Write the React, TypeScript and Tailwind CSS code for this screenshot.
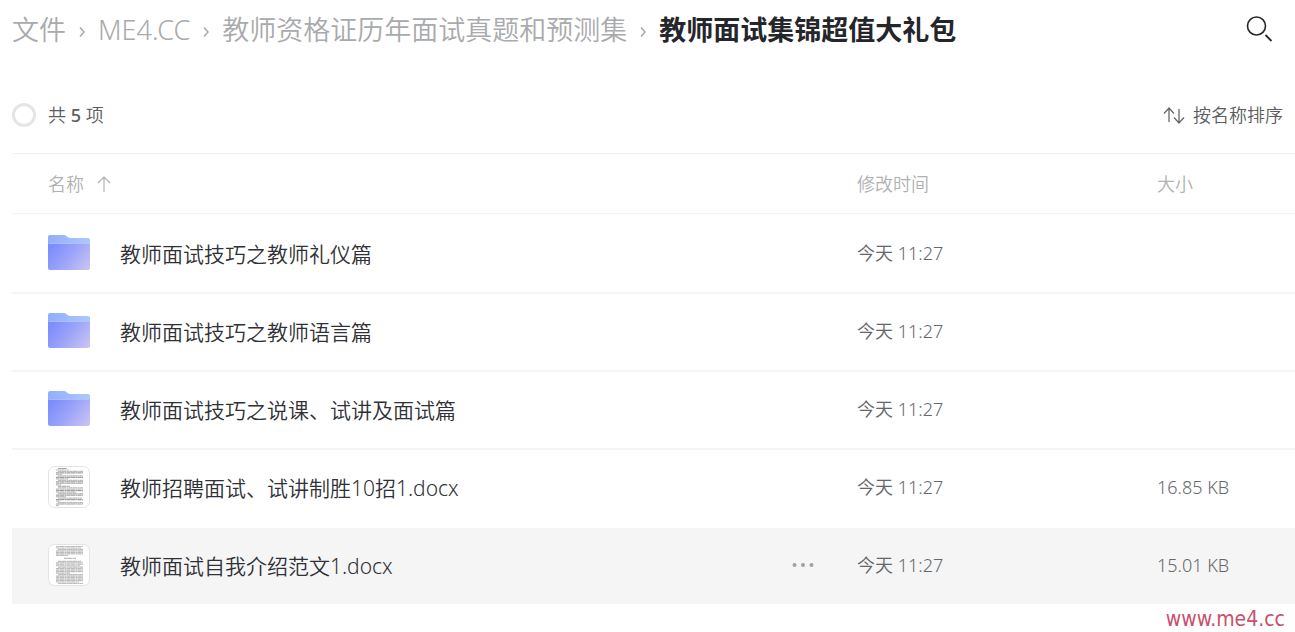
import { clsx } from "clsx";

type Item = {
  name: string;
  type: "folder" | "list" | "article";
  time: string;
  size?: string;
  active?: boolean;
};

const PATHS = ["文件", "ME4.CC", "教师资格证历年面试真题和预测集"];

const ITEMS: Item[] = [
  { name: "教师面试技巧之教师礼仪篇", type: "folder", time: "今天 11:27" },
  { name: "教师面试技巧之教师语言篇", type: "folder", time: "今天 11:27" },
  { name: "教师面试技巧之说课、试讲及面试篇", type: "folder", time: "今天 11:27" },
  { name: "教师招聘面试、试讲制胜10招1.docx", type: "list", time: "今天 11:27", size: "16.85 KB" },
  { name: "教师面试自我介绍范文1.docx", type: "article", time: "今天 11:27", size: "15.01 KB", active: true },
];

// [start, width] of each text line on the page preview
const PREVIEW_LINES = {
  list: [
    [2, 9], [0, 13], [2, 25], [0, 27], [0, 6], [2, 25], [0, 27], [0, 12], [2, 25], [0, 27], [0, 27],
    [0, 5], [2, 12], [2, 25], [0, 27], [0, 27], [0, 20], [2, 25], [0, 27], [0, 10], [2, 24], [0, 27],
    [0, 4], [2, 25], [0, 27], [0, 3],
  ],
  article: [
    [0, 27], [0, 25], [2, 25], [0, 27], [0, 27], [0, 27], [0, 12], [0, 0], [8, 12], [0, 0], [2, 23],
    [0, 27], [0, 27], [0, 24], [2, 25], [0, 27], [0, 27], [0, 27], [0, 14], [2, 25], [0, 27], [0, 27],
    [0, 27], [0, 27], [0, 23], [2, 25],
  ],
};

const FolderIcon = () => (
  <svg className="w-[42px] h-[42px] shrink-0" viewBox="0 0 42 42" aria-hidden="true">
    <defs>
      <linearGradient id="folder-front" x1="0" y1="0.3" x2="1" y2="0.8">
        <stop offset="0" stopColor="#7c8dfd" />
        <stop offset="0.5" stopColor="#9da5f8" />
        <stop offset="1" stopColor="#c6c0f5" />
      </linearGradient>
      <linearGradient id="folder-back" x1="0" y1="0" x2="1" y2="0">
        <stop offset="0" stopColor="#92aefb" />
        <stop offset="1" stopColor="#adc8ff" />
      </linearGradient>
    </defs>
    <path
      d="M0 5a2 2 0 0 1 2-2h13.500c1.200 0 2 .3 2.800 1l1.700 1.300c.6.500 1.200.7 2 .7h18a2 2 0 0 1 2 2v12H0z"
      fill="url(#folder-back)"
    />
    <path d="M0 13a2 2 0 0 1 2-2h38a2 2 0 0 1 2 2v23a2 2 0 0 1-2 2H2a2 2 0 0 1-2-2z" fill="url(#folder-front)" />
    <path d="M1 11.500h40" stroke="#b9cbff" strokeOpacity="0.7" />
  </svg>
);

const DocIcon = ({ type }: { type: "list" | "article" }) => (
  <svg className="w-[42px] h-[42px] shrink-0" viewBox="0 0 42 42" aria-hidden="true">
    <rect x="0.5" y="0.5" width="41" height="41" rx="6" fill="#fff" stroke="#e3e3e3" />
    {PREVIEW_LINES[type].map(([start, width], index) => (
      <path
        key={"line" + index}
        d={`M${8 + start} ${2.5 + index * 1.480}h${width}`}
        stroke={type === "list" && index % 3 === 0 ? "#a0a0a0" : "#bcbcbc"}
        strokeWidth="1.200"
        strokeDasharray="3 0.3 5 0.4 2 0.3"
      />
    ))}
  </svg>
);

const SearchIcon = () => (
  <svg className="w-[30px] h-[30px]" viewBox="0 0 30 30" fill="none" stroke="#25262b" aria-hidden="true">
    <circle cx="11.500" cy="11" r="9" strokeWidth="1.600" />
    <path d="M20.500 20l6 6" strokeWidth="1.800" />
  </svg>
);

const SortIcon = () => (
  <svg className="w-6 h-6" viewBox="0 0 24 24" fill="none" stroke="#66676b" strokeWidth="1.300" aria-hidden="true">
    <path d="M8 19V5M3 10.500l5-5.500 5 5.500M18 6v14M13 14.500l5 5.500 5-5.500" />
  </svg>
);

const ArrowUpIcon = () => (
  <svg className="w-4 h-4" viewBox="0 0 16 16" fill="none" stroke="#b0b1b3" strokeWidth="1.200" aria-hidden="true">
    <path d="M8 16V1M2 7l6-6 6 6" />
  </svg>
);

const ChevronIcon = () => (
  <svg className="w-2 h-3 mt-1" viewBox="0 0 8 12" fill="none" stroke="#a4a5a8" strokeWidth="1.400" aria-hidden="true">
    <path d="M2 1.500L6 6l-4 4.500" />
  </svg>
);

const MoreIcon = () => (
  <svg className="w-6 h-6" viewBox="0 0 24 24" fill="#a0a1a3" aria-hidden="true">
    <circle cx="3.500" cy="12" r="2" />
    <circle cx="12" cy="12" r="2" />
    <circle cx="20.500" cy="12" r="2" />
  </svg>
);

const Breadcrumb = () => (
  <header className="flex items-center justify-between h-[60px] pr-5">
    <nav className="flex items-center text-[27px] leading-9 whitespace-nowrap">
      {PATHS.map((path) => (
        <div key={path} className="flex items-center">
          <a href="#" className="text-[#a9aaac]">
            {path}
          </a>
          <span className="flex justify-center w-8">
            <ChevronIcon />
          </span>
        </div>
      ))}
      <h1 className="font-bold text-[#25262b]">教师面试集锦超值大礼包</h1>
    </nav>
    <button className="cursor-pointer" aria-label="搜索">
      <SearchIcon />
    </button>
  </header>
);

const Toolbar = () => (
  <div className="flex items-center justify-between h-6 mt-[43px] mb-[26px] pr-3 text-[18px] text-[#5c5d61]">
    <label className="flex items-center gap-3">
      <input
        type="checkbox"
        className="w-6 h-6 appearance-none rounded-full border-[3px] border-[#e5e5e6] bg-white checked:bg-[#637dff]"
      />
      <span>
        共 <span className="font-medium">5</span> 项
      </span>
    </label>
    <button className="flex items-center gap-2 cursor-pointer">
      <SortIcon />
      按名称排序
    </button>
  </div>
);

const Row = ({ item, first }: { item: Item; first: boolean }) => {
  const cell = clsx(
    "h-[78px] p-0 pb-0.5 border-t-2 bg-clip-padding",
    first || item.active ? "border-transparent" : "border-[#f5f5f6]",
    item.active && "bg-[#f5f5f6]",
  );

  return (
    <tr>
      <td className={cell}>
        <div className="flex items-center pl-9 pr-[42px]">
          {item.type === "folder" ? <FolderIcon /> : <DocIcon type={item.type} />}
          <a href="#" className="ml-[30px] pt-0.5 text-[21px] leading-7 text-[#303136]">
            {item.name}
          </a>
          {item.active && (
            <button className="ml-auto cursor-pointer" aria-label="更多">
              <MoreIcon />
            </button>
          )}
        </div>
      </td>
      <td className={cell}>{item.time}</td>
      <td className={cell}>{item.size}</td>
    </tr>
  );
};

const FileTable = () => (
  <table className="w-full table-fixed border-separate border-spacing-0 text-left text-[18px] leading-6 text-[#66676b]">
    <thead className="text-[#b0b1b3]">
      <tr>
        <th className="h-[61px] p-0 pl-9 border-y border-[#f3f3f4] font-[350]" aria-sort="ascending">
          <button className="flex items-center gap-3 cursor-pointer">
            名称
            <ArrowUpIcon />
          </button>
        </th>
        <th className="w-[300px] p-0 border-y border-[#f3f3f4] font-[350]">修改时间</th>
        <th className="w-[138px] p-0 border-y border-[#f3f3f4] font-[350]">大小</th>
      </tr>
    </thead>
    <tbody>
      {ITEMS.map((item, index) => (
        <Row key={item.name} item={item} first={index === 0} />
      ))}
    </tbody>
  </table>
);

export default function App() {
  return (
    <main className="pl-3 bg-white font-[350] font-['Noto_Sans','Noto_Sans_CJK_SC',sans-serif]">
      <Breadcrumb />
      <Toolbar />
      <FileTable />
      <footer className="pr-[10px] text-right text-[21px] leading-7">
        <a href="#" className="font-normal text-[#c8506a] font-['DejaVu_Sans_Condensed','DejaVu_Sans',sans-serif]">
          www.me4.cc
        </a>
      </footer>
    </main>
  );
}
